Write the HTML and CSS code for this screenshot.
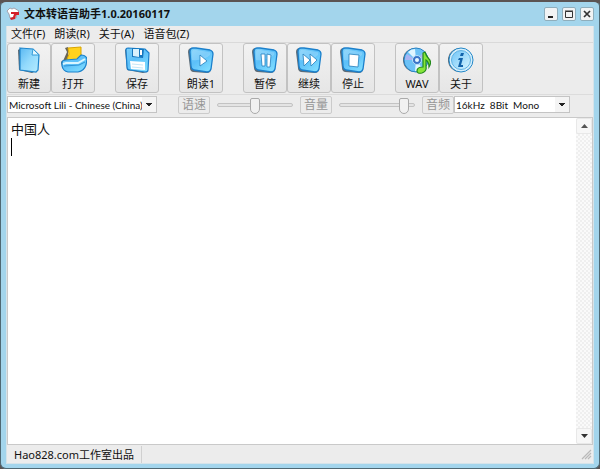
FILE: index.html
```html
<!DOCTYPE html>
<html lang="zh-CN">
<head>
<meta charset="UTF-8">
<title>文本转语音助手1.0.20160117</title>
<link rel="stylesheet" href="styles.css">
</head>

<body>
<!-- shared gradients and the blue tile behind the player icons -->
<svg class="defs" width="0" height="0">
  <defs>
    <linearGradient id="blue" x1="0" y1="0" x2=".7" y2="1">
      <stop offset="0" stop-color="#7cd0fa"/>
      <stop offset=".5" stop-color="#5cc0f9"/>
      <stop offset="1" stop-color="#7edcff"/>
    </linearGradient>
    <linearGradient id="sheet" x1="0" y1="0" x2="1" y2="1">
      <stop offset="0" stop-color="#5ab8f2"/>
      <stop offset=".5" stop-color="#93dafc"/>
      <stop offset="1" stop-color="#b5ecff"/>
    </linearGradient>
    <linearGradient id="pale" x1="0" y1="0" x2="1" y2="1">
      <stop offset="0" stop-color="#6fc4f7"/>
      <stop offset="1" stop-color="#d8f6ff"/>
    </linearGradient>
    <symbol id="tile" viewBox="0 0 28 28">
      <path d="M5 2Q1 2 1 6L3 22Q3 25 6 26L20 27Q23 27 24 24L22 6Z" fill="#5d6c78"/>
      <path d="M6 2Q3 2 3 6L4 20Q4 23 7 24L20 26Q23 26 24 23L26 8Q26 5 23 4L9 2Z" fill="url(#blue)" stroke="#1b80cc" stroke-width="1.3"/>
      <path d="M5 6Q5 3 9 4L22 6Q24 6 23 9Q17 15 5 14Z" fill="#fff" opacity=".2"/>
    </symbol>
  </defs>
</svg>

<div class="window">
  <header class="titlebar">
    <svg class="logo" viewBox="0 0 14 14">
      <path d="M1 4L4 1L6 2L8 1L13 4L11 6L10 11L4 11L3 7Z" fill="#fff" stroke="#9a8f99" stroke-width=".8"/>
      <path d="M5 5L13 5L13 8L10 8L9 12L5 13L4 11L7 10L8 7L5 7Z" fill="#d3202a"/>
    </svg>
    <h1 class="title">文本转语音助手1.0.20160117</h1>
    <button class="winbtn" aria-label="最小化"><svg viewBox="0 0 12 12"><path d="M3 9H8" stroke="#222" stroke-width="2"/></svg></button>
    <button class="winbtn" aria-label="最大化"><svg viewBox="0 0 12 12"><path d="M2.5 3.5H9.5V9.5H2.5ZM2 3H10" fill="none" stroke="#333"/></svg></button>
    <button class="winbtn" aria-label="关闭"><svg viewBox="0 0 12 12"><path d="M3 3L9 9M9 3L3 9" stroke="#333" stroke-width="1.7"/></svg></button>
  </header>

  <main class="client">
    <nav class="menu">
      <button>文件(F)</button>
      <button>朗读(R)</button>
      <button>关于(A)</button>
      <button>语音包(Z)</button>
    </nav>

    <div class="toolbar">
      <div class="group">
        <button class="tool">
          <svg viewBox="0 0 28 28">
            <path d="M6 2L3 4L4 24L17 27L21 25Z" fill="#566672"/>
            <path d="M5 2L18 3L24 9L23 24L21 26L5 24Z" fill="url(#sheet)" stroke="#1f86cc" stroke-width="1.2"/>
            <path d="M18 3L17 9L24 9Z" fill="#e4f8ff" stroke="#339bd8"/>
          </svg>
          新建
        </button>
        <button class="tool">
          <svg viewBox="0 0 28 28">
            <path d="M9 1L6 2L8 6L4 15L9 15Z" fill="#6a6656"/>
            <path d="M9 2L22 1L22 8L24 14L7 16L10 8Z" fill="#ffd21c" stroke="#d9a400"/>
            <path d="M2 17Q2 14 6 14L8 19L4 23Z" fill="#4b6579"/>
            <path d="M3 17Q3 14 7 14L18 13L22 9Q27 9 28 13L27 19Q25 25 19 26L9 26Q4 25 3 20Z" fill="url(#blue)" stroke="#1b82cb" stroke-width="1.2"/>
            <path d="M4 18L7 17L19 17L26 13" fill="none" stroke="#d9f5ff" stroke-width="2"/>
            <path d="M5 20L20 19L26 16" fill="none" stroke="#2f93d6"/>
          </svg>
          打开
        </button>
      </div>
      <div class="group">
        <button class="tool">
          <svg viewBox="0 0 28 28">
            <path d="M4 2L2 4L4 24L20 27L24 26V24Z" fill="#566672"/>
            <path d="M5 2L22 3L26 7L25 24Q25 26 22 26L7 24Q4 24 4 21L3 4Q3 2 5 2Z" fill="url(#blue)" stroke="#1b80cc" stroke-width="1.2"/>
            <path d="M9 2L21 3L20 12L9 11Z" fill="#1676bd"/>
            <path d="M10 3L16 3V11L10 10Z" fill="#d8f1fd"/>
            <path d="M17 4L19 4V9L17 9Z" fill="#fff"/>
            <path d="M7 15L22 16V24L8 23Z" fill="#fff"/>
            <path d="M9 18L20 19M9 21L20 22" stroke="#c5e6f7"/>
          </svg>
          保存
        </button>
      </div>
      <div class="group">
        <button class="tool">
          <svg viewBox="0 0 28 28">
            <use href="#tile"/>
            <path d="M13 9L20 15L13 20Z" fill="#fff" stroke="#237fbd" stroke-width=".8"/>
          </svg>
          朗读1
        </button>
      </div>
      <div class="group">
        <button class="tool">
          <svg viewBox="0 0 28 28">
            <use href="#tile"/>
            <path d="M10 8L14 8V20L11 20ZM16 8L20 9L19 21H16Z" fill="#fff" stroke="#237fbd" stroke-width=".8"/>
          </svg>
          暂停
        </button>
        <button class="tool">
          <svg viewBox="0 0 28 28">
            <use href="#tile"/>
            <path d="M8 8L15 14L9 20ZM15 8L22 14L16 20Z" fill="#fff" stroke="#237fbd" stroke-width=".8"/>
          </svg>
          继续
        </button>
        <button class="tool">
          <svg viewBox="0 0 28 28">
            <use href="#tile"/>
            <path d="M10 8L20 9L19 21L10 20Z" fill="#fff" stroke="#237fbd" stroke-width=".8"/>
          </svg>
          停止
        </button>
      </div>
      <div class="group">
        <button class="tool">
          <svg viewBox="0 0 28 28">
            <circle cx="12" cy="14" r="12" fill="#566672"/>
            <circle cx="13" cy="14" r="12" fill="#6cc2f6" stroke="#2a83c4"/>
            <path d="M13 14L5 6A11 11 0 0 1 12 3ZM13 14L20 23A11 11 0 0 1 12 25Z" fill="#dff5ff"/>
            <path d="M13 14L2 14A11 11 0 0 1 4 8ZM13 14L21 6A11 11 0 0 1 24 11Z" fill="#a9b4f2"/>
            <circle cx="14" cy="14" r="4.5" fill="#3a74c8" stroke="#b9e2fa"/>
            <circle cx="14" cy="14" r="2" fill="#e5f6ff"/>
            <path d="M20 21V7L22 6Q23 10 26 13Q29 16 26 21Q26 16 23 14V21Q24 25 19 27Q14 28 14 25Q14 21 20 21Z" fill="#86e63a" stroke="#238a1c" stroke-width="1.2"/>
          </svg>
          WAV
        </button>
        <button class="tool">
          <svg viewBox="0 0 28 28">
            <circle cx="13" cy="14" r="12" fill="#566672"/>
            <circle cx="14" cy="14" r="12" fill="#d5effc" stroke="#2588c8"/>
            <circle cx="14" cy="14" r="9.5" fill="url(#pale)" stroke="#5fb2e3"/>
            <path d="M14 7H17L16 10H13ZM12 12H16L14 19H16V21H11L13 14H11Z" fill="#1264ac"/>
          </svg>
          关于
        </button>
      </div>
    </div>

    <div class="options">
      <select class="combo voice" aria-label="语音">
        <option>Microsoft Lili - Chinese (China)</option>
      </select>
      <label class="tag" for="speed">语速</label>
      <input class="slider" id="speed" type="range" min="0" max="100" value="50">
      <label class="tag" for="volume">音量</label>
      <input class="slider" id="volume" type="range" min="0" max="100" value="92">
      <label class="tag" for="format">音频</label>
      <select class="combo format" id="format">
        <option>16kHz&nbsp; 8Bit&nbsp; Mono</option>
      </select>
    </div>

    <div class="editor">
      <textarea class="text" aria-label="文本" spellcheck="false">中国人
</textarea>
      <span class="caret"></span>
      <div class="scrollbar">
        <button aria-label="向上"><svg viewBox="0 0 7 4"><path d="M0 4L3.5 0L7 4Z" fill="#555"/></svg></button>
        <button aria-label="向下"><svg viewBox="0 0 7 4"><path d="M0 0L3.5 4L7 0Z" fill="#333"/></svg></button>
      </div>
    </div>

    <footer class="status">
      <span class="credit">Hao828.com工作室出品</span>
      <svg class="grip" viewBox="0 0 14 14"><path d="M3 12L12 3M6 12L12 6M9 12L12 9" stroke="#b9b9b9" stroke-width="1.2"/></svg>
    </footer>
  </main>
</div>
</body>
</html>
```

FILE: styles.css
```css
* {
    box-sizing: border-box;
}
body {
    margin: 0;
    background: #5b5453;
    font-family: "Noto Sans", "Noto Sans CJK SC", sans-serif;
    font-size: 12px;
    color: #111;
}
button, select, textarea {
    font: inherit;
    color: inherit;
}
button {
    padding: 0;
}
.defs {
    position: absolute;
}
.window {
    display: flex;
    flex-direction: column;
    height: 100vh;
    padding: 0 5px 4px;
    border: 1px solid #4f6873;
    border-top: 2px solid #5b5453;
    border-radius: 6px;
    background: #a3d5ec;
}

/* title bar */
.titlebar {
    display: flex;
    align-items: center;
    gap: 4px;
    height: 24px;
}
.logo {
    width: 14px;
    height: 14px;
}
.title {
    flex: 1;
    margin: 0;
    font-size: 11px;
    font-weight: bold;
    line-height: 16px;
}
.winbtn {
    display: flex;
    width: 14px;
    height: 14px;
    border: 1px solid #8faebc;
    border-radius: 2px;
    background: #f1f3f4;
}
.winbtn svg {
    width: 12px;
    height: 12px;
}

.client {
    flex: 1;
    display: flex;
    flex-direction: column;
    min-height: 0;
    border: 1px solid #d5e3e9;
    border-top: 0;
    background: #ececec;
}

/* menu */
.menu {
    display: flex;
    gap: 9px;
    height: 16px;
    padding-left: 4px;
}
.menu button {
    border: 0;
    background: none;
    font-size: 11px;
    line-height: 16px;
}

/* toolbar */
.toolbar {
    display: flex;
    gap: 20px;
    height: 53px;
    border-top: 1px solid #d9d9d9;
    border-bottom: 1px solid #dcdcdc;
}
.group {
    display: flex;
}
.tool {
    display: flex;
    flex-direction: column;
    align-items: center;
    width: 44px;
    height: 50px;
    padding-top: 2px;
    border: 1px solid #c2c2c2;
    border-radius: 3px;
    background: linear-gradient(#f2f2f2, #e6e6e6);
    font-size: 11px;
    line-height: 20px;
}
.tool svg {
    width: 28px;
    height: 28px;
    flex: none;
}

/* voice, speed, volume and format */
.options {
    display: flex;
    align-items: center;
    height: 22px;
    padding-bottom: 3px;
}
.combo {
    height: 17px;
    padding: 0 14px 0 1px;
    border: 1px solid #c4c4c4;
    border-radius: 0;
    appearance: none;
    /* two halves of the arrow, then the drop-down box */
    background:
        linear-gradient(to bottom left, #222 50%, transparent 50%) right 7px top 6px / 3px 4px no-repeat,
        linear-gradient(to bottom right, #222 50%, transparent 50%) right 4px top 6px / 3px 4px no-repeat,
        linear-gradient(#f4f4f4, #f4f4f4) right / 14px 100% no-repeat,
        #fff;
    font-family: Lato, "Liberation Sans", sans-serif;
    font-size: 10px;
}
.voice {
    width: 150px;
    margin-right: 21px;
}
.format {
    width: 116px;
}
.tag {
    width: 32px;
    height: 18px;
    border: 1px solid #cbcbcb;
    border-radius: 2px;
    font-size: 12px;
    line-height: 16px;
    text-align: center;
    color: #969696;
}
.slider {
    width: 76px;
    height: 18px;
    margin: 0 7px;
    appearance: none;
    background: none;
}
.slider::-webkit-slider-runnable-track {
    height: 4px;
    border: 1px solid #c3c3c3;
    border-radius: 2px;
    background: #e4e4e4;
}
.slider::-webkit-slider-thumb {
    appearance: none;
    width: 10px;
    height: 16px;
    margin-top: -6px;
    border: 1px solid #aaa;
    border-radius: 2px 2px 5px 5px;
    background: #f1f1f1;
}

/* text area */
.editor {
    position: relative;
    flex: 1;
    display: flex;
    min-height: 0;
    border: 1px solid #c9c9c9;
    background: #fff;
}
.text {
    flex: 1;
    padding: 2px 3px;
    border: 0;
    outline: 0;
    resize: none;
    overflow: hidden;
    background: none;
    font-size: 13px;
    line-height: 18px;
}
.caret {
    position: absolute;
    left: 3px;
    top: 20px;
    width: 1px;
    height: 18px;
    background: #000;
}
.scrollbar {
    display: flex;
    flex-direction: column;
    justify-content: space-between;
    width: 16px;
    background: repeating-conic-gradient(#efefef 0 25%, #fafafa 0 50%) 0 0 / 4px 4px;
}
.scrollbar button {
    display: flex;
    align-items: center;
    justify-content: center;
    width: 16px;
    height: 16px;
    border: 1px solid #e8e8e8;
    border-radius: 2px;
    background: #f7f7f7;
}
.scrollbar svg {
    width: 7px;
    height: 4px;
}

/* status bar */
.status {
    display: flex;
    justify-content: space-between;
    align-items: center;
    height: 18px;
}
.credit {
    padding: 0 7px;
    border-right: 1px solid #d0d0d0;
    font-size: 11px;
    line-height: 17px;
}
.grip {
    width: 14px;
    height: 14px;
}
```
